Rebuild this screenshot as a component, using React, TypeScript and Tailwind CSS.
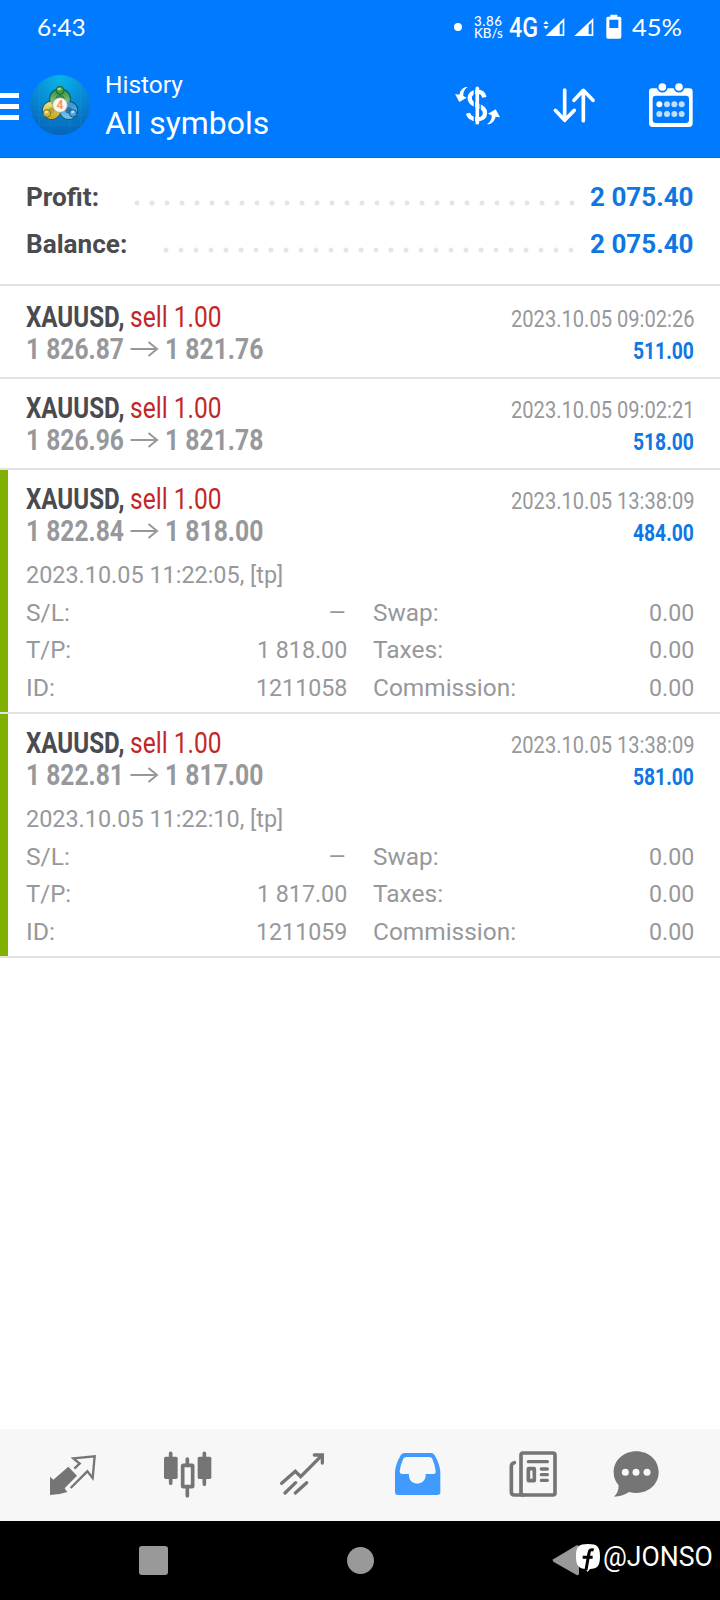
import { useLayoutEffect, useRef, useState } from "react";
import type { ReactNode } from "react";

/** Text squeezed horizontally so that it takes exactly `width` pixels. */
function Fit({ width, className = "", children }: { width: number; className?: string; children: ReactNode }) {
  const ref = useRef<HTMLSpanElement>(null);
  const [scale, setScale] = useState(1);
  useLayoutEffect(() => {
    if (ref.current) setScale(width / ref.current.offsetWidth);
  }, [width]);
  return (
    <span className={`flex shrink-0 ${className}`} style={{ width }}>
      <span
        ref={ref}
        className="block shrink-0 origin-left whitespace-pre"
        style={{ transform: `scaleX(${scale})` }}
      >
        {children}
      </span>
    </span>
  );
}

type Deal = {
  from: string;
  to: string;
  time: string;
  profit: string;
  details?: { opened: string; tp: string; id: string };
};

const deals: Deal[] = [
  { from: "1 826.87", to: "1 821.76", time: "2023.10.05 09:02:26", profit: "511.00" },
  { from: "1 826.96", to: "1 821.78", time: "2023.10.05 09:02:21", profit: "518.00" },
  {
    from: "1 822.84",
    to: "1 818.00",
    time: "2023.10.05 13:38:09",
    profit: "484.00",
    details: { opened: "2023.10.05 11:22:05, [tp]", tp: "1 818.00", id: "1211058" },
  },
  {
    from: "1 822.81",
    to: "1 817.00",
    time: "2023.10.05 13:38:09",
    profit: "581.00",
    details: { opened: "2023.10.05 11:22:10, [tp]", tp: "1 817.00", id: "1211059" },
  },
];

function StatusBar() {
  return (
    <div className="flex h-[54px] items-center text-white">
      <Fit width={49} className="ml-[37px] font-['Lato',sans-serif] text-[24px] leading-[54px]">6:43</Fit>
      <span className="ml-auto size-2 rounded-full bg-white" />
      <Fit width={28.5} className="ml-3 font-['Lato',sans-serif] text-[13px] leading-[12px] font-medium">
        <span className="tracking-[0.6px]">3.86</span>
        <br />
        KB/s
      </Fit>
      <Fit width={29} className="ml-[6.5px] font-['Roboto',sans-serif] text-[28px] leading-[53px] font-medium">4G</Fit>
      <svg className="ml-[5px] h-[26px] w-[22px]" viewBox="341 42 66 78" fill="white">
        <path d="M350 62l8 10h-16zM350 88l8-10h-16z" />
        <path fillRule="evenodd" d="M349 108L405 54V108zM391 76V103H400V67z" />
      </svg>
      <svg className="ml-[9px] h-[26px] w-5" viewBox="434 42 60 78" fill="white">
        <path fillRule="evenodd" d="M435 108L492 54V108zM478 76V103H487V67z" />
      </svg>
      <svg className="ml-3 h-[26px] w-4" viewBox="530 40 48 78" fill="white">
        <path
          fillRule="evenodd"
          d="M543 42h21v6h7q5 0 5 5v56q0 5-5 5h-35q-5 0-5-5V53q0-5 5-5h7zM540 57V82H567V57z"
        />
      </svg>
      <Fit width={50} className="mr-[38px] ml-[10px] font-['Lato',sans-serif] text-[24px] leading-[54px]">45%</Fit>
    </div>
  );
}

function AppLogo() {
  return (
    <svg className="ml-[11px] size-[60px]" viewBox="90 225 180 180">
      <defs>
        <radialGradient id="sky" cx="0.5" cy="0.05" r="1">
          <stop offset="0" stopColor="#08b4e8" />
          <stop offset="0.5" stopColor="#0788d4" />
          <stop offset="1" stopColor="#0560b4" />
        </radialGradient>
        <linearGradient id="leaf" x1="0" y1="0" x2="0" y2="1">
          <stop offset="0" stopColor="#3d9a4c" />
          <stop offset="1" stopColor="#9ccf86" />
        </linearGradient>
        <linearGradient id="gold" x1="0" y1="0" x2="0" y2="1">
          <stop offset="0" stopColor="#e8dc7a" />
          <stop offset="1" stopColor="#c9ac2c" />
        </linearGradient>
        <linearGradient id="azure" x1="0" y1="0" x2="0" y2="1">
          <stop offset="0" stopColor="#3f97d8" />
          <stop offset="1" stopColor="#6fc0ee" />
        </linearGradient>
      </defs>
      <circle cx="180" cy="315" r="90" fill="url(#sky)" />
      <path
        d="M118 255V378M150 232V400M210 232V400M242 255V378M98 285H262M92 315H268M98 345H262M115 375H245"
        stroke="#35a5de"
        strokeWidth="1.5"
        opacity="0.35"
      />
      <g fill="none" strokeWidth="21" stroke="#174c49">
        <circle cx="180" cy="297" r="22" />
        <circle cx="155" cy="331" r="18" />
        <circle cx="206" cy="331" r="18" />
      </g>
      <circle cx="155" cy="331" r="18" fill="#b5a63c" stroke="url(#gold)" strokeWidth="17" />
      <circle cx="180" cy="297" r="22" fill="#35884d" stroke="url(#leaf)" strokeWidth="16" />
      <circle cx="206" cy="331" r="18" fill="#2a72ae" stroke="url(#azure)" strokeWidth="16" />
      <circle cx="180" cy="271" r="12" fill="#3f9c49" stroke="#1f6533" strokeWidth="3" />
      <ellipse cx="178" cy="267" rx="6" ry="4" fill="#a5d99b" />
      <circle cx="141" cy="340" r="11" fill="#d4b93a" stroke="#7d7423" strokeWidth="3" />
      <ellipse cx="139" cy="336" rx="5" ry="4" fill="#f5ecae" />
      <circle cx="219" cy="340" r="11" fill="#4fa6e2" stroke="#1c568d" strokeWidth="3" />
      <ellipse cx="218" cy="336" rx="5" ry="4" fill="#b6e0fa" />
      <circle cx="180" cy="315" r="22" fill="#faf7f2" stroke="#9a9c93" strokeWidth="2" />
      <text
        x="180"
        y="328"
        textAnchor="middle"
        fontFamily="Roboto, sans-serif"
        fontWeight="700"
        fontSize="36"
        fill="#f09a5c"
      >
        4
      </text>
    </svg>
  );
}

function AppBar() {
  return (
    <div className="flex h-[104px] items-start">
      <div className="mt-[39px] flex w-[19px] flex-col gap-[6px]">
        <span className="h-[5px] bg-white" />
        <span className="h-[5px] bg-white" />
        <span className="h-[5px] bg-white" />
      </div>
      <div className="mt-[21px]">
        <AppLogo />
      </div>
      <div className="mt-[15px] ml-[15px] flex flex-col font-['Roboto',sans-serif] text-white">
        <Fit width={77.5} className="text-[24px] leading-[32px]">History</Fit>
        <Fit width={164.5} className="text-[32px] leading-[44px]">All symbols</Fit>
      </div>
      <svg
        className="mt-[31px] ml-auto h-[42px] w-[48px]"
        viewBox="72 255 144 126"
        fill="none"
        stroke="white"
        strokeLinecap="round"
      >
        <path d="M142 265V368" strokeWidth="11" />
        <path
          d="M163 292C160 278 152 275 142 275C128 275 119 284 119 295C119 308 129 313 142 317C156 321 165 326 165 339C165 351 156 358 142 358C127 358 117 352 114 340"
          strokeWidth="13"
          strokeLinecap="butt"
        />
        <path d="M133 268V366M150.500 284V350" stroke="#007aff" strokeWidth="4" strokeLinecap="butt" />
        <g fill="white" stroke="none">
          <path d="M113 261C103 260 91 268 88 284L75 282L88 306L110 293L100 288C99 277 103 268 113 261z" />
          <path d="M171 373C181 374 193 366 197 350L210 352L197 328L174 341L185 346C186 357 181 366 171 373z" />
        </g>
      </svg>
      <svg
        className="mt-[33px] ml-[50px] h-[36px] w-[44px]"
        viewBox="367 261 132 108"
        fill="none"
        stroke="white"
        strokeWidth="11"
        strokeLinecap="round"
        strokeLinejoin="round"
      >
        <path d="M405 270V360M377 331L405 361L434 331M461 362V272M433 301L461 271L490 301" />
      </svg>
      <svg className="mt-[28px] mr-[27px] ml-[52px] h-[46px] w-[45px]" viewBox="654 246 135 138" fill="white">
        <path
          fillRule="evenodd"
          d="M667 265H778Q788 265 788 275V370Q788 381 777 381H668Q657 381 657 370V275Q657 265 667 265zM677 287Q668 287 668 296V360Q668 369 677 369H768Q777 369 777 360V296Q777 287 768 287z"
        />
        <circle cx="697" cy="261" r="14" stroke="#007aff" strokeWidth="5" />
        <circle cx="747" cy="261" r="14" stroke="#007aff" strokeWidth="5" />
        <circle cx="688" cy="313" r="9" />
        <g opacity="0.75">
          <circle cx="711" cy="313" r="9" />
          <circle cx="733" cy="313" r="9" />
          <circle cx="755" cy="313" r="9" />
          <circle cx="688" cy="342" r="9" />
          <circle cx="711" cy="342" r="9" />
          <circle cx="733" cy="342" r="9" />
          <circle cx="755" cy="342" r="9" />
        </g>
      </svg>
    </div>
  );
}

function SummaryRow({ label, labelWidth, dots, value }: { label: string; labelWidth: number; dots: number; value: string }) {
  const width = (dots - 1) * 15 + 6;
  return (
    <div className="flex h-[47px] items-center leading-[47px]">
      <Fit width={labelWidth} className="text-[26px] font-bold text-[#4a4a4f]">{label}</Fit>
      <svg
        className={`mt-[10px] ml-auto h-[6px] ${dots === 30 ? "mr-[15px]" : "mr-[16.5px]"}`}
        width={width}
        viewBox={`0 0 ${width} 6`}
      >
        <path
          d={`M3 3H${width - 2.9}`}
          stroke="#e5e5e5"
          strokeWidth="5"
          strokeLinecap="round"
          strokeDasharray="0 15"
        />
      </svg>
      <Fit width={104} className="text-[26px] font-bold text-[#0f77e2]">{value}</Fit>
    </div>
  );
}

function DetailPair({ label, labelWidth, value, valueWidth }: { label: string; labelWidth: number; value: string; valueWidth: number }) {
  return (
    <div className="flex justify-between">
      <Fit width={labelWidth}>{label}</Fit>
      <Fit width={valueWidth}>{value}</Fit>
    </div>
  );
}

function DealRow({ deal, first }: { deal: Deal; first: boolean }) {
  const d = deal.details;
  return (
    <div className={`flex border-b-2 border-[#e3e3e3] ${first ? "pt-[2px]" : ""}`}>
      <div className={`w-[7.5px] shrink-0 ${d ? "bg-[#80b100]" : ""}`} />
      <div className="grow pt-[13px] pr-[26px] pl-[18.5px]">
        <div className="flex h-8 justify-between leading-8">
          <div className="flex text-[29.5px]">
            <Fit width={104} className="font-bold text-[#4a4a4f]">{"XAUUSD, "}</Fit>
            <Fit width={91.5} className="text-[#c22727]">sell 1.00</Fit>
          </div>
          <Fit width={183.5} className="pt-[2px] text-[24px] text-[#97989b]">{deal.time}</Fit>
        </div>
        <div className="flex h-8 justify-between leading-8">
          <div className="flex text-[29.5px] font-bold text-[#97989b]">
            <Fit width={97.5}>{deal.from}</Fit>
            <svg
              className="mt-[7px] ml-[6.5px] h-[18px] w-[29px]"
              viewBox="0 0 29 18"
              fill="none"
              stroke="#97989b"
              strokeWidth="2"
            >
              <path d="M0.500 9H27M18.500 2L27 9L18.500 16" />
            </svg>
            <Fit width={98} className="ml-[6px]">{deal.to}</Fit>
          </div>
          <Fit width={61} className="pt-[2px] text-[24px] font-bold text-[#0f77e2]">{deal.profit}</Fit>
        </div>
        {d ? (
          <div className="mt-[9px] pb-[5px] text-[24px] text-[#97989b]">
            <Fit width={257.5} className="leading-[38px]">{d.opened}</Fit>
            <div className="flex gap-[26px] pt-[0.5px] leading-[37.5px]">
              <div className="w-[321px]">
                <DetailPair label="S/L:" labelWidth={44} value="–" valueWidth={19} />
                <DetailPair label="T/P:" labelWidth={45} value={d.tp} valueWidth={90} />
                <DetailPair label="ID:" labelWidth={29} value={d.id} valueWidth={91} />
              </div>
              <div className="grow">
                <DetailPair label="Swap:" labelWidth={66} value="0.00" valueWidth={45.5} />
                <DetailPair label="Taxes:" labelWidth={70.5} value="0.00" valueWidth={45.5} />
                <DetailPair label="Commission:" labelWidth={143.5} value="0.00" valueWidth={45.5} />
              </div>
            </div>
          </div>
        ) : (
          <div className="h-3" />
        )}
      </div>
    </div>
  );
}

function TabBar() {
  return (
    <div className="flex h-[92px] items-start bg-[#f7f7f7] pt-[21px] text-[#757575]">
      <svg className="ml-[47px] size-[50px]" viewBox="141 90 150 150" fill="currentColor">
        <path d="M205 140L231 167L194 205L202 216Q176 225 150 225V170L160 179z" />
        <path
          d="M223 146L239 131L220 115L284 109L278 174L262 154L212 204"
          fill="none"
          stroke="currentColor"
          strokeWidth="7"
        />
      </svg>
      <svg className="ml-[66px] size-[50px]" viewBox="489 90 150 150" fill="currentColor">
        <path
          d="M512 100V190M613 100V193M562 117V132M562 205V227"
          stroke="currentColor"
          strokeWidth="11"
          strokeLinecap="round"
        />
        <rect x="492" y="110" width="41" height="67" rx="5" />
        <rect x="593" y="110" width="41" height="67" rx="5" />
        <rect x="548" y="136" width="30" height="64" rx="2" fill="#f7f7f7" stroke="currentColor" strokeWidth="11" />
      </svg>
      <svg
        className="ml-[65px] size-[50px]"
        viewBox="834 90 150 150"
        fill="none"
        stroke="currentColor"
        strokeWidth="10"
        strokeLinecap="round"
      >
        <path d="M845 190L886 154L902 170L965 107M943 105H967V129M855 219L887 188M886 219L920 188" />
      </svg>
      <svg className="ml-[65px] size-[50px]" viewBox="99 90 150 150" fill="#419bff">
        <path
          fillRule="evenodd"
          d="M134 99H212Q221 99 224 106Q240 134 241 156V216Q241 225 232 225H114Q105 225 105 216V156Q106 134 122 106Q126 99 134 99zM139 111Q132 111 130 116Q120 137 119 154Q119 162 127 162H147V168C149 198 194 198 197 168V162H220Q228 162 227 154Q226 137 217 116Q215 111 208 111z"
        />
      </svg>
      <svg
        className="ml-[65px] size-[50px]"
        viewBox="444 90 150 150"
        fill="none"
        stroke="currentColor"
        strokeWidth="11"
        strokeLinecap="round"
      >
        <rect x="483" y="99" width="102" height="126" rx="6" />
        <path d="M463 128Q454 130 454 139V216Q454 225 463 225H490" />
        <path d="M505 125H562M544 147H562M544 164H562M544 181H562" strokeWidth="10" />
        <rect x="505" y="146" width="18" height="36" rx="1" />
      </svg>
      <svg className="ml-[54px] size-[50px]" viewBox="756 90 150 150" fill="currentColor">
        <path d="M829 94C867 94 896 121 896 157C896 193 866 219 829 219Q818 219 807 216Q786 230 762 230Q776 218 776 196Q761 180 761 157C761 121 791 94 829 94z" />
        <g fill="#f7f7f7">
          <circle cx="796" cy="157" r="10.500" />
          <circle cx="828" cy="157" r="10.500" />
          <circle cx="861" cy="157" r="10.500" />
        </g>
      </svg>
    </div>
  );
}

function SystemNav() {
  return (
    <div className="flex h-[79px] items-start bg-black">
      <span className="mt-[25px] ml-[139px] size-[29px] rounded-[3px] bg-[#999]" />
      <span className="mt-[26px] ml-[179px] size-[27px] rounded-full bg-[#999]" />
      <svg className="mt-[23px] ml-[178px] h-8 w-[50px]" viewBox="576 372 150 96">
        <path d="M580 418L650 376Q657 374 657 381V460Q657 468 650 465L580 425Q576 421 580 418z" fill="#999" />
        <path
          d="M684 372C712 372 720 380 720 409C720 438 712 447 690 447L682 456L678 447C656 446 648 438 648 409C648 380 656 372 684 372z"
          fill="white"
        />
        <path
          d="M701 390Q689 386 687 399L678 450M668 412H698"
          fill="none"
          stroke="black"
          strokeWidth="9"
        />
      </svg>
      <Fit width={110} className="mt-[20px] ml-px text-[28px] leading-[32px] text-white">@JONSO</Fit>
    </div>
  );
}

export default function App() {
  return (
    <div className="flex h-[1600px] w-[720px] flex-col overflow-hidden bg-white font-['Roboto',sans-serif]">
      <header className="h-[158px] shrink-0 border-b border-[#1668c4] bg-[#007aff]">
        <StatusBar />
        <AppBar />
      </header>
      <section className="border-b-2 border-[#e3e3e3] px-[26px] py-4">
        <SummaryRow label="Profit:" labelWidth={73.5} dots={30} value="2 075.40" />
        <SummaryRow label="Balance:" labelWidth={101.5} dots={28} value="2 075.40" />
      </section>
      <main className="grow">
        {deals.map((deal, i) => (
          <DealRow key={i} deal={deal} first={i === 0} />
        ))}
      </main>
      <TabBar />
      <SystemNav />
    </div>
  );
}
